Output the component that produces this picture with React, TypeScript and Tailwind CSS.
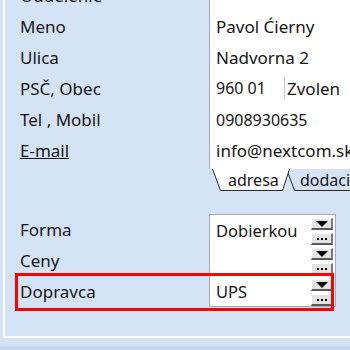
import React from "react";

const font = { fontFamily: '"Noto Sans", "Open Sans", sans-serif' };

const topRows: { label: string; value?: React.ReactNode; underline?: boolean }[] = [
  { label: "Oddelenie" },
  { label: "Meno", value: "Pavol Ćierny" },
  { label: "Ulica", value: "Nadvorna 2" },
  {
    label: "PSČ, Obec",
    value: (
      <div className="flex h-full items-stretch">
        <span className="w-[68px] text-[16px]">960 01</span>
        <span className="my-[4px] border-l border-[#b9cde9] pl-[2px] leading-[23px]">Zvolen</span>
      </div>
    ),
  },
  { label: "Tel , Mobil", value: <span className="text-[16px]">0908930635</span> },
  { label: "E-mail", value: "info@nextcom.sk", underline: true },
];

function DropButton() {
  return (
    <div className="flex h-[12px] w-[22px] items-center justify-center border-t border-l border-white border-r-2 border-b-2 border-r-[#7a7a7a] border-b-[#5a5a5a] bg-[#e4e4e4]">
      <svg width="14" height="8" viewBox="0 0 14 8">
        <polygon points="1,1 13,1 7,7" fill="#000" />
      </svg>
    </div>
  );
}

function DotsButton() {
  return (
    <div className="flex h-[12px] w-[22px] items-end justify-center pb-[2px] border-t border-l border-white border-r-2 border-b-2 border-r-[#7a7a7a] border-b-[#5a5a5a] bg-[#e4e4e4]">
      <svg width="12" height="3" viewBox="0 0 12 3">
        <rect x="1" y="0" width="2" height="2" fill="#000" />
        <rect x="5" y="0" width="2" height="2" fill="#000" />
        <rect x="9" y="0" width="2" height="2" fill="#000" />
      </svg>
    </div>
  );
}

function ComboRow({
  label,
  value,
  first,
  last,
  highlight,
}: {
  label: string;
  value: string;
  first?: boolean;
  last?: boolean;
  highlight?: boolean;
}) {
  return (
    <div className="relative flex h-[31px]">
      <div className="w-[204px] shrink-0 pl-[15px] leading-[31px]">{label}</div>
      <div
        className={`flex w-[127px] shrink-0 border-x border-[#a3acb8] bg-white ${first ? "border-t" : ""} ${
          last ? "border-b" : ""
        }`}
      >
        <div className="flex-1 pl-[6px] text-[16.5px] leading-[31px]">{value}</div>
        <div className="mr-[2px] flex flex-col gap-[3px] pt-[3px]">
          <DropButton />
          <DotsButton />
        </div>
      </div>
      {highlight && (
        <div className="absolute left-[10px] top-[-3px] h-[38px] w-[319px] border-[3px] border-[#ff0000]" />
      )}
    </div>
  );
}

export default function App() {
  return (
    <div
      className="flex h-[350px] w-[350px] flex-col overflow-hidden bg-[#d5e3f7] text-[17px] text-[#161616]"
      style={font}
    >
      <div className="ml-[3px] flex h-[338px] shrink-0 flex-col border-l-2 border-b-2 border-white">
        {/* address block */}
        <div className="mt-[-20px] flex h-[189px] shrink-0">
          <div className="w-[204px] shrink-0 pl-[15px]">
            {topRows.map((r) => (
              <div key={r.label} className={`h-[31px] leading-[31px] ${r.underline ? "underline" : ""}`}>
                {r.label}
              </div>
            ))}
          </div>
          <div className="min-w-0 flex-1 overflow-hidden border-l border-[#a3acb8] bg-white pl-[6px] whitespace-nowrap">
            {topRows.map((r) => (
              <div key={r.label} className="h-[31px] leading-[31px]">
                {r.value}
              </div>
            ))}
          </div>
        </div>

        {/* tabs */}
        <div className="ml-[207px] flex h-[22px] shrink-0 overflow-hidden text-[16px]">
          <div className="relative z-10 w-[78px] shrink-0 pl-[16px] leading-[22px]">
            <svg className="absolute inset-0" width="78" height="22" viewBox="0 0 78 22">
              <path d="M0.5 0 L8.5 21.5 L70.5 21.5 L77.5 0" fill="#fff" stroke="#2a2a2a" strokeWidth="1" />
            </svg>
            <span className="relative">adresa</span>
          </div>
          <div className="relative ml-[-4px] w-[90px] shrink-0 pl-[14px] leading-[22px]">
            <svg className="absolute inset-0" width="90" height="22" viewBox="0 0 90 22">
              <path d="M0.5 0 L8.5 21.5 L89 21.5" fill="#d5e3f7" stroke="#2a2a2a" strokeWidth="1" />
            </svg>
            <span className="relative">dodacia</span>
          </div>
        </div>

        <div className="h-[23px] shrink-0" />

        <ComboRow label="Forma" value="Dobierkou" first />
        <ComboRow label="Ceny" value="" />
        <ComboRow label="Dopravca" value="UPS" last highlight />
      </div>
      <div className="h-[8px] shrink-0" />
      <div className="flex-1 bg-[#c6d6ee]" />
    </div>
  );
}
